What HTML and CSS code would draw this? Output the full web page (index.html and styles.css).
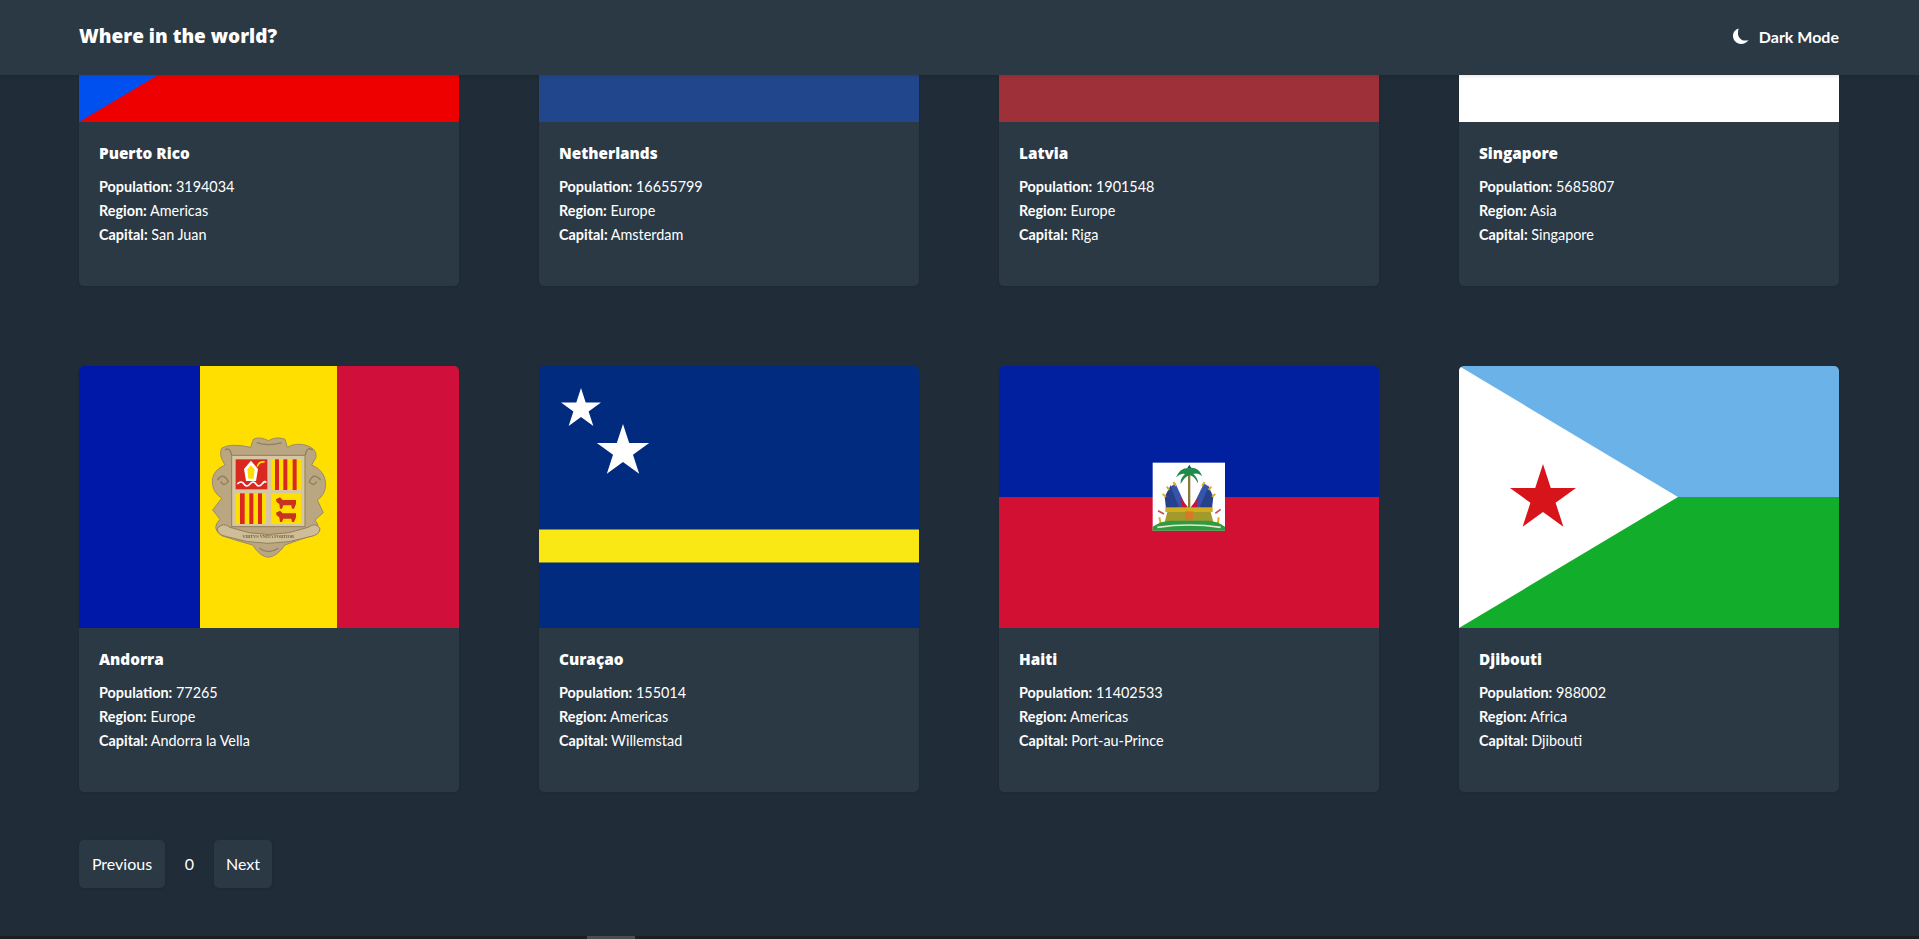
FILE: index.html
```html
<!DOCTYPE html>
<html lang="en">
<head>
    <meta charset="UTF-8">
    <meta name="viewport" content="width=device-width, initial-scale=1.0">
    <title>Where in the world?</title>
    <link rel="stylesheet" href="styles.css">
</head>
<body>
<header class="topbar">
    <h1 class="brand">Where in the world?</h1>
    <button class="theme-toggle">
        <svg class="moon" viewBox="0 0 16 16"><path d="M5.6 .6C2.3 1.6 0 4.6 0 8.1 0 12.500 3.600 16 8 16c2.900 0 5.800-1.500 7.600-4.100-.9.500-2 .7-3.200.7-4.100 0-7.400-3.200-7.400-7.200 0-1.700.2-3.300.6-4.800z"/></svg>
        Dark Mode
    </button>
</header>

<main class="content">
    <section class="country-grid">
        <!-- top row is scrolled under the header, only the end of each flag shows -->
        <article class="card">
            <svg class="flag flag-cut" viewBox="0 215 380 47">
                <rect y="215" width="380" height="47" fill="#ee0000"/>
                <polygon points="0,215 79,215 0,262" fill="#0050f0"/>
            </svg>
            <div class="card-body">
                <h2>Puerto Rico</h2>
                <p><b>Population:</b> 3194034</p>
                <p><b>Region:</b> Americas</p>
                <p><b>Capital:</b> San Juan</p>
            </div>
        </article>
        <article class="card">
            <svg class="flag flag-cut" viewBox="0 215 380 47">
                <rect y="215" width="380" height="47" fill="#21468b"/>
            </svg>
            <div class="card-body">
                <h2>Netherlands</h2>
                <p><b>Population:</b> 16655799</p>
                <p><b>Region:</b> Europe</p>
                <p><b>Capital:</b> Amsterdam</p>
            </div>
        </article>
        <article class="card">
            <svg class="flag flag-cut" viewBox="0 215 380 47">
                <rect y="215" width="380" height="47" fill="#9e3039"/>
            </svg>
            <div class="card-body">
                <h2>Latvia</h2>
                <p><b>Population:</b> 1901548</p>
                <p><b>Region:</b> Europe</p>
                <p><b>Capital:</b> Riga</p>
            </div>
        </article>
        <article class="card">
            <svg class="flag flag-cut" viewBox="0 215 380 47">
                <rect y="215" width="380" height="47" fill="#ffffff"/>
            </svg>
            <div class="card-body">
                <h2>Singapore</h2>
                <p><b>Population:</b> 5685807</p>
                <p><b>Region:</b> Asia</p>
                <p><b>Capital:</b> Singapore</p>
            </div>
        </article>

        <article class="card">
            <svg class="flag" viewBox="0 0 380 262">
                <rect width="121" height="262" fill="#0018a8"/>
                <rect x="121" width="137" height="262" fill="#fedf00"/>
                <rect x="258" width="122" height="262" fill="#d0103a"/>
                <g class="soft" transform="translate(101 34) scale(.3333)">
                    <path d="M220 118Q240 108 265 122Q290 108 315 118L322 142Q345 128 375 135Q412 145 408 172L395 195Q435 212 437 250Q437 285 412 300L430 338L405 360Q428 385 395 407Q350 422 315 435Q290 470 265 472Q240 470 218 435Q170 422 125 407Q92 385 120 358L98 330L125 295Q95 275 97 240Q100 210 135 195Q115 165 125 145Q150 128 212 142Z" fill="#bba682" stroke="#9c8a66" stroke-width="3"/>
                    <g fill="none" stroke="#8f7f5c" stroke-width="4">
                        <path d="M135 150Q150 140 155 165"/>
                        <path d="M398 150Q380 138 376 165"/>
                        <path d="M112 240Q130 215 145 245Q130 262 122 245"/>
                        <path d="M422 240Q400 215 388 245Q400 262 410 245"/>
                        <path d="M230 128Q265 140 305 128"/>
                        <path d="M238 445Q265 465 295 445"/>
                    </g>
                    <rect x="155" y="166" width="220" height="214" fill="#d6c6a2" stroke="#8f7f5c" stroke-width="3"/>
                    <rect x="167" y="178" width="95" height="90" fill="#d8281f"/>
                    <polygon points="213,182 234,207 228,243 198,243 192,207" fill="#fff"/>
                    <polygon points="213,196 224,208 221,236 205,236 202,208" fill="#fedf00"/>
                    <path d="M172 252q12-12 20 0t18 0 18 0 18 0 12-4" fill="none" stroke="#fff" stroke-width="5"/>
                    <path d="M232 200q4-16 22-14" fill="none" stroke="#fedf00" stroke-width="5"/>
                    <rect x="274" y="178" width="89" height="92" fill="#fedf00"/>
                    <g fill="#d8281f">
                        <rect x="285" y="178" width="12" height="92"/>
                        <rect x="310" y="178" width="12" height="92"/>
                        <rect x="338" y="178" width="12" height="92"/>
                    </g>
                    <rect x="167" y="280" width="91" height="92" fill="#fedf00"/>
                    <g fill="#d8281f">
                        <rect x="180" y="280" width="14" height="92"/>
                        <rect x="208" y="280" width="12" height="92"/>
                        <rect x="234" y="280" width="12" height="92"/>
                    </g>
                    <rect x="274" y="280" width="89" height="92" fill="#fedf00"/>
                    <g fill="#c8321f">
                        <path d="M288 298l12-6 8 8h40v12l-6 14h-6l-2-10h-24l-4 10h-6l-2-14-8-6z"/>
                        <path d="M288 338l12-6 8 8h40v12l-6 14h-6l-2-10h-24l-4 10h-6l-2-14-8-6z"/>
                    </g>
                    <path d="M112 385Q130 365 150 382Q265 425 385 382Q405 365 420 385Q420 405 390 410Q265 450 140 410Q112 405 112 385Z" fill="#cfbd97" stroke="#8f7f5c" stroke-width="3"/>
                    <text class="motto" x="265" y="414" text-anchor="middle">VIRTVS VNITA FORTIOR</text>
                </g>
            </svg>
            <div class="card-body">
                <h2>Andorra</h2>
                <p><b>Population:</b> 77265</p>
                <p><b>Region:</b> Europe</p>
                <p><b>Capital:</b> Andorra la Vella</p>
            </div>
        </article>
        <article class="card">
            <svg class="flag" viewBox="0 0 380 262">
                <rect width="380" height="262" fill="#002b7f"/>
                <rect y="163.500" width="380" height="33" fill="#f9e814"/>
                <polygon transform="translate(42 43) scale(21)" fill="#fff" points="0,-1 .2245,-.309 .951,-.309 .363,.118 .588,.809 0,.382 -.588,.809 -.363,.118 -.951,-.309 -.2245,-.309"/>
                <polygon transform="translate(84 85.500) scale(27.500)" fill="#fff" points="0,-1 .2245,-.309 .951,-.309 .363,.118 .588,.809 0,.382 -.588,.809 -.363,.118 -.951,-.309 -.2245,-.309"/>
            </svg>
            <div class="card-body">
                <h2>Curaçao</h2>
                <p><b>Population:</b> 155014</p>
                <p><b>Region:</b> Americas</p>
                <p><b>Capital:</b> Willemstad</p>
            </div>
        </article>
        <article class="card">
            <svg class="flag" viewBox="0 0 380 262">
                <rect width="380" height="131" fill="#00209f"/>
                <rect y="131" width="380" height="131" fill="#d21034"/>
                <g class="soft" transform="translate(131 84) scale(.3333)">
                    <rect x="68" y="38" width="217" height="204" fill="#fff"/>
                    <rect x="174" y="75" width="7" height="110" fill="#8a7a3a"/>
                    <path d="M178 44l6 10h-12z" fill="#27408b"/>
                    <path d="M178 54Q205 50 217 78Q200 68 190 72Q205 85 204 100Q192 78 180 76Q165 78 152 102Q150 85 165 72Q152 68 138 82Q150 52 178 54Z" fill="#1f8a4c"/>
                    <polygon points="168,172 122,106 104,140 108,176" fill="#27408b"/>
                    <polygon points="172,178 136,100 122,110 150,178" fill="#3554ad"/>
                    <polygon points="188,172 234,106 250,140 246,176" fill="#27408b"/>
                    <polygon points="184,178 222,100 236,110 206,178" fill="#3554ad"/>
                    <polygon points="158,182 150,142 174,172" fill="#d21034"/>
                    <polygon points="198,182 206,142 182,172" fill="#d21034"/>
                    <rect x="106" y="172" width="142" height="14" fill="#d2ae1c"/>
                    <path d="M112 186h130l8 30H104z" fill="#a39a2c"/>
                    <rect x="166" y="184" width="24" height="26" fill="#d8792a"/>
                    <g stroke="#d8b020" stroke-width="6" fill="none">
                        <path d="M130 96l8 12"/>
                        <path d="M110 110l8 10"/>
                        <path d="M98 132l10 8"/>
                        <path d="M224 96l-8 12"/>
                        <path d="M244 110l-8 10"/>
                        <path d="M256 132l-10 8"/>
                        <path d="M88 202l4 18"/>
                        <path d="M266 202l-2 18"/>
                    </g>
                    <path d="M84 182l18 10M272 178l-16 12" stroke="#c05050" stroke-width="5"/>
                    <path d="M68 242v-12Q90 214 120 212H235Q265 214 285 230v12Z" fill="#2f9a3f"/>
                    <path d="M82 232Q178 218 272 232" stroke="#e8e8d0" stroke-width="5" fill="none"/>
                </g>
            </svg>
            <div class="card-body">
                <h2>Haiti</h2>
                <p><b>Population:</b> 11402533</p>
                <p><b>Region:</b> Americas</p>
                <p><b>Capital:</b> Port-au-Prince</p>
            </div>
        </article>
        <article class="card">
            <svg class="flag" viewBox="0 0 380 262">
                <rect width="380" height="131" fill="#6ab2e7"/>
                <rect y="131" width="380" height="131" fill="#12ad2b"/>
                <polygon points="0,0 219,131 0,262" fill="#fff"/>
                <polygon transform="translate(84 132.700) scale(34.700)" fill="#d7141a" points="0,-1 .2245,-.309 .951,-.309 .363,.118 .588,.809 0,.382 -.588,.809 -.363,.118 -.951,-.309 -.2245,-.309"/>
            </svg>
            <div class="card-body">
                <h2>Djibouti</h2>
                <p><b>Population:</b> 988002</p>
                <p><b>Region:</b> Africa</p>
                <p><b>Capital:</b> Djibouti</p>
            </div>
        </article>
    </section>

    <nav class="pager">
        <button class="pager-btn">Previous</button>
        <span class="pager-num">0</span>
        <button class="pager-btn">Next</button>
    </nav>
</main>

<div class="hscroll"><div class="hscroll-thumb"></div></div>
</body>
</html>
```

FILE: styles.css
```css
* {
    margin: 0;
    padding: 0;
    box-sizing: border-box;
}

body {
    font-family: Lato, "Open Sans", sans-serif;
    background: #202c37;
    color: #fff;
    height: 939px;
    display: flex;
    flex-direction: column;
    overflow: hidden;
}

.topbar {
    height: 75px;
    flex: none;
    display: flex;
    align-items: center;
    justify-content: space-between;
    padding: 0 80px 3px 79px;
    background: #2b3945;
    box-shadow: 0 1px 4px rgba(0, 0, 0, 0.12);
    position: relative;
    z-index: 2;
}

.brand {
    font-family: "Open Sans", sans-serif;
    font-size: 19px;
    font-weight: 800;
}

.theme-toggle {
    display: flex;
    align-items: center;
    gap: 10px;
    background: none;
    border: 0;
    color: #fff;
    font: 700 16px Lato, "Open Sans", sans-serif;
}

.moon {
    width: 16px;
    height: 16px;
    fill: #fff;
}

.content {
    flex: 1;
    padding: 0 80px 0 79px;
}

.country-grid {
    display: grid;
    grid-template-columns: repeat(4, 380px);
    column-gap: 80px;
    row-gap: 80px;
}

.card {
    background: #2b3945;
    border-radius: 0 0 5px 5px;
    overflow: hidden;
    box-shadow: 0 1px 3px rgba(0, 0, 0, 0.08);
    height: 426px;
}

.card:nth-child(-n+4) {
    height: 211px;
}

.card:nth-child(n+5) {
    border-radius: 5px;
}

.flag {
    display: block;
    width: 380px;
    height: 262px;
}

.flag-cut {
    height: 47px;
}

/* crests come from small images in the original, keep them a bit soft */
.soft {
    filter: blur(1.2px);
}

.card-body {
    padding: 20px 20px 0;
}

.card-body h2 {
    font-family: "Open Sans", sans-serif;
    font-size: 15.300px;
    font-weight: 800;
    line-height: 22px;
    margin-bottom: 11px;
}

.card-body p {
    font-size: 14.400px;
    line-height: 24px;
}

.card-body b {
    font-weight: 700;
}

.motto {
    font: 700 13px "Liberation Serif", serif;
    fill: #6b5b3c;
}

.pager {
    display: flex;
    align-items: center;
    margin-top: 48px;
}

.pager-btn {
    height: 48px;
    min-width: 58px;
    padding: 0 12px 2px;
    background: #2b3945;
    border: 0;
    border-radius: 5px;
    color: #fff;
    font: 400 16px Lato, "Open Sans", sans-serif;
    box-shadow: 0 1px 3px rgba(0, 0, 0, 0.1);
}

.pager-btn:first-child {
    min-width: 86px;
}

.pager-num {
    width: 49px;
    padding-bottom: 2px;
    text-align: center;
    font-size: 16px;
}

.hscroll {
    height: 3px;
    flex: none;
    background: #1e1e1e;
    padding-left: 587px;
}

.hscroll-thumb {
    width: 48px;
    height: 3px;
    background: #4d4d4d;
}
```
